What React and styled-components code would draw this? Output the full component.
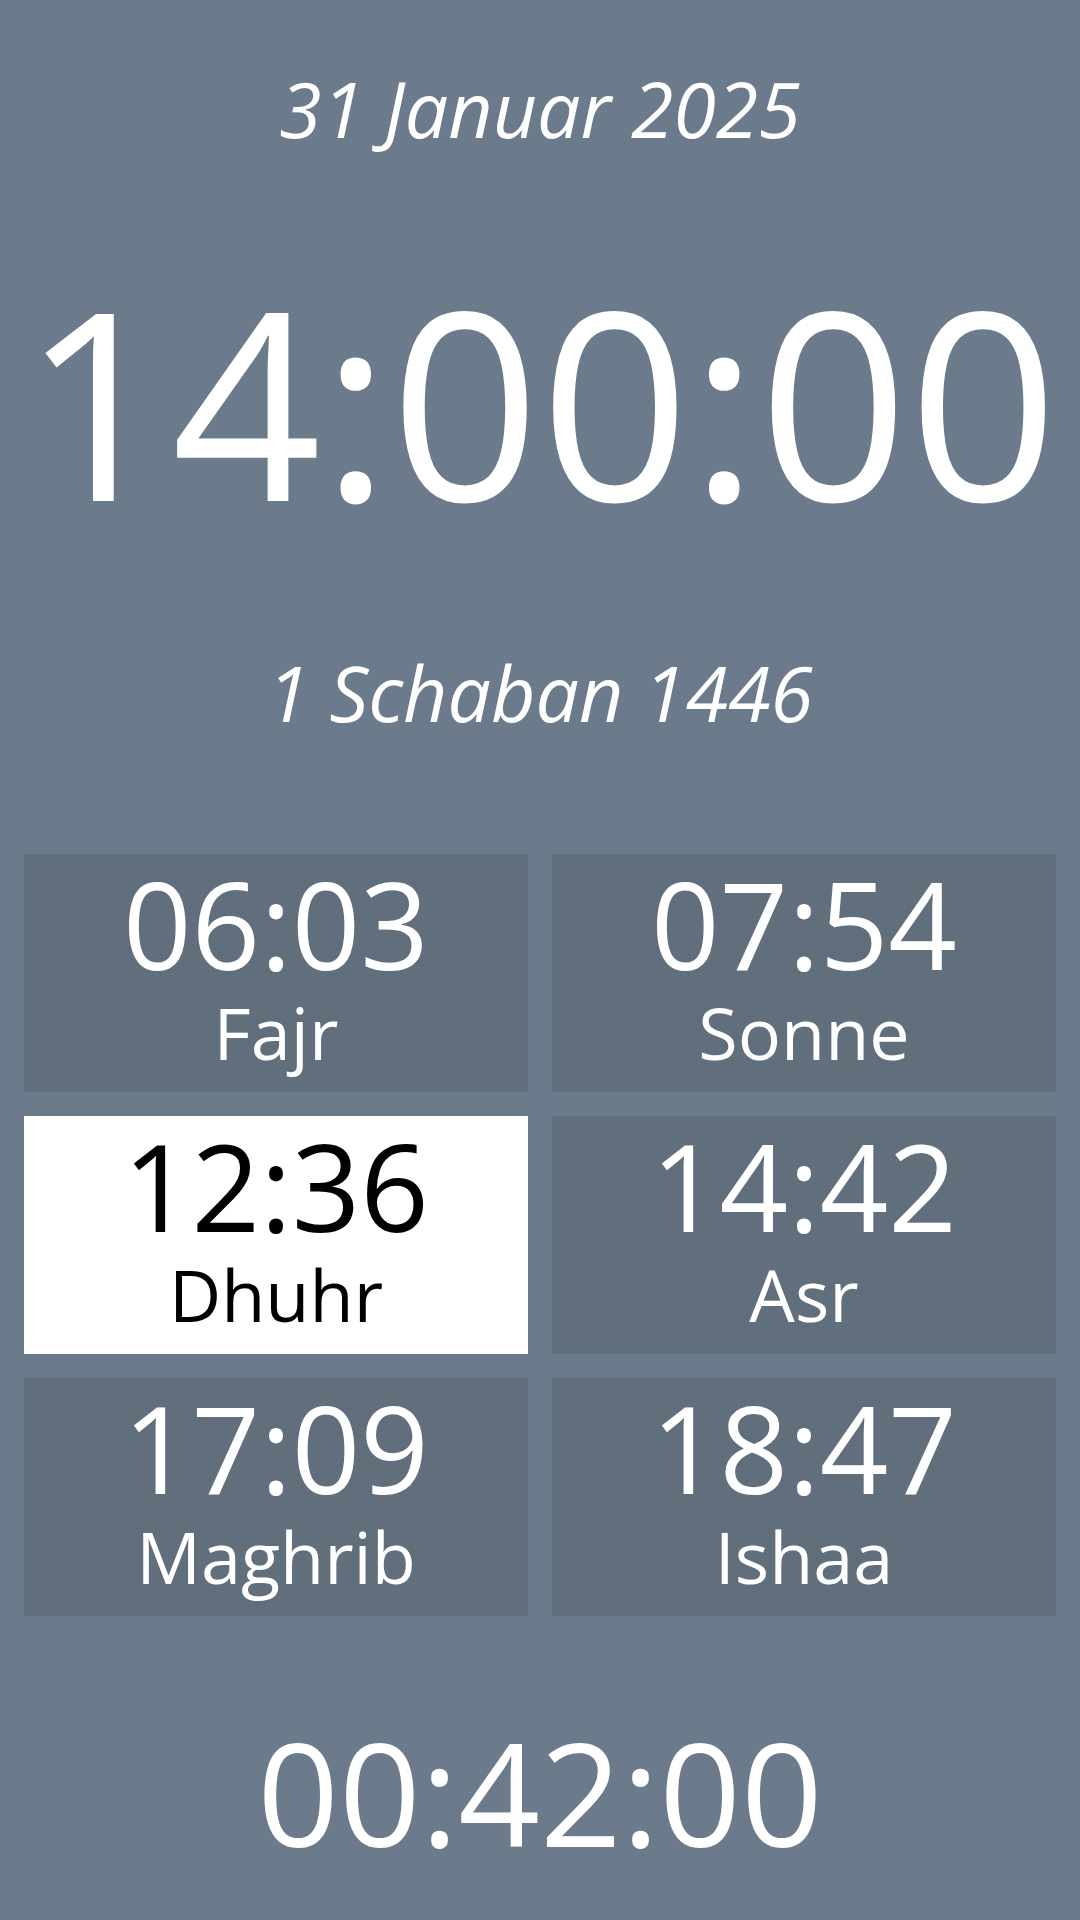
import React from "react";
import styled, { createGlobalStyle } from "styled-components";

const GlobalStyle = createGlobalStyle`
  html, body {
    margin: 0;
    padding: 0;
    background: #6c7b8b;
  }
  body {
    font-family: "Open Sans", "Noto Sans", sans-serif;
    color: #ffffff;
  }
`;

const Screen = styled.div`
  width: 1080px;
  height: 1920px;
  box-sizing: border-box;
  background: #6c7b8b;
  display: flex;
  flex-direction: column;
  align-items: stretch;
  padding-top: 70px;
  overflow: hidden;
`;

const DateLine = styled.div`
  font-size: 77px;
  line-height: 1;
  font-style: italic;
  text-align: center;
  white-space: nowrap;
  margin-bottom: ${(p) => p.$after || 0}px;
`;

const Clock = styled.div`
  font-size: 262px;
  line-height: 1;
  text-align: center;
  white-space: nowrap;
  margin-bottom: 123px;
`;

const Grid = styled.div`
  display: grid;
  grid-template-columns: 1fr 1fr;
  grid-auto-rows: 238px;
  gap: 24px;
  padding: 0 24px;
  margin-bottom: 104px;
`;

const Card = styled.div`
  background: ${(p) => (p.$active ? "#ffffff" : "#616e7c")};
  color: ${(p) => (p.$active ? "#000000" : "#ffffff")};
  display: flex;
  flex-direction: column;
  align-items: center;
  padding-top: 10px;
  box-sizing: border-box;
`;

const Time = styled.div`
  font-size: 120px;
  line-height: 1;
`;

const Label = styled.div`
  font-size: 72px;
  line-height: 1;
  margin-top: 12px;
`;

const Countdown = styled.div`
  font-size: 143px;
  line-height: 1;
  text-align: center;
  white-space: nowrap;
`;

const prayers = [
  { time: "06:03", name: "Fajr" },
  { time: "07:54", name: "Sonne" },
  { time: "12:36", name: "Dhuhr", active: true },
  { time: "14:42", name: "Asr" },
  { time: "17:09", name: "Maghrib" },
  { time: "18:47", name: "Ishaa" },
];

export default function App() {
  return (
    <>
      <GlobalStyle />
      <Screen>
        <DateLine $after={122}>31 Januar 2025</DateLine>
        <Clock>14:00:00</Clock>
        <DateLine $after={123}>1 Schaban 1446</DateLine>
        <Grid>
          {prayers.map((p) => (
            <Card key={p.name} $active={p.active}>
              <Time>{p.time}</Time>
              <Label>{p.name}</Label>
            </Card>
          ))}
        </Grid>
        <Countdown>00:42:00</Countdown>
      </Screen>
    </>
  );
}
